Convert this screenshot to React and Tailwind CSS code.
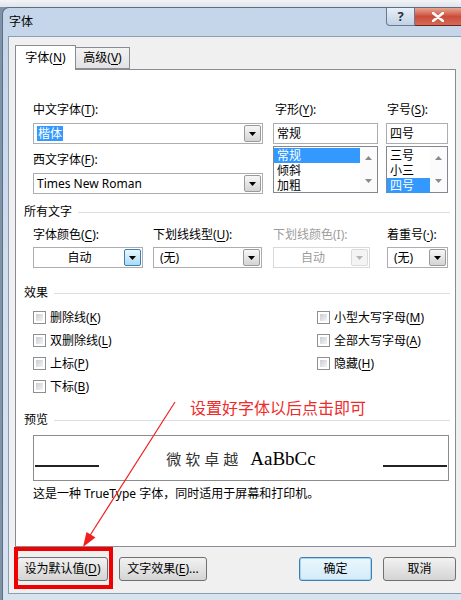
import React from 'react'

const U = ({ children }) => <span className="underline underline-offset-[2px]">{children}</span>

const Arrow = ({ color = '#000' }) => (
  <svg width="7" height="4" viewBox="0 0 7 4">
    <path d="M0 0h7L3.5 4z" fill={color} />
  </svg>
)

const DropBtn = ({ variant }) => {
  const cls =
    variant === 'hot'
      ? 'border-[#3c7fb1] bg-gradient-to-b from-[#eaf6fd] to-[#a9dbf6]'
      : variant === 'off'
      ? 'border-[#dadada] bg-[#f4f4f4]'
      : 'border-[#9a9a9a] bg-gradient-to-b from-[#f7f7f7] to-[#d4d4d4]'
  return (
    <div className={`w-[17px] border rounded-[2px] flex items-center justify-center ${cls}`}>
      <Arrow color={variant === 'off' ? '#b5b5b5' : '#000'} />
    </div>
  )
}

const Combo = ({ className, children, center, variant }) => (
  <div className={`h-[21px] border border-[#abadb3] bg-white flex p-[1px] ${className}`}>
    <div className={`flex-1 flex items-center leading-[16px] ${center ? 'justify-center' : 'pl-[5px]'}`}>{children}</div>
    <DropBtn variant={variant} />
  </div>
)

const ScrollArrows = () => (
  <div className="w-[17px] flex flex-col items-center justify-between py-[9px] bg-[#fbfbfb]">
    <svg width="7" height="4" viewBox="0 0 7 4"><path d="M0 4h7L3.5 0z" fill="#8a8a8a" /></svg>
    <svg width="7" height="4" viewBox="0 0 7 4"><path d="M0 0h7L3.5 4z" fill="#8a8a8a" /></svg>
  </div>
)

const ListBox = ({ items, sel }) => (
  <div className="mt-[2px] h-[47px] border border-[#828790] bg-white flex">
    <div className="flex-1 pt-[1px]">
      {items.map((t, i) => (
        <div
          key={t}
          className={`h-[15px] flex items-center pl-[3px] overflow-hidden ${i === sel ? 'bg-[#3399ff] text-white' : ''}`}
        >
          <span className="leading-[13px]">{t}</span>
        </div>
      ))}
    </div>
    <ScrollArrows />
  </div>
)

const Section = ({ title }) => (
  <div className="flex items-center h-[16px] pl-[8px] pr-[5px]">
    <span className="leading-[16px]">{title}</span>
    <div className="flex-1 h-px bg-[#d5dfe5] ml-[6px]" />
  </div>
)

const Check = ({ children }) => (
  <div className="h-[23px] flex items-center">
    <div className="w-[13px] h-[13px] border border-[#8e8f8f] bg-white p-[2px]">
      <div className="w-full h-full bg-gradient-to-br from-[#c9cdd3] to-[#f4f4f4]" />
    </div>
    <span className="ml-[4px] leading-[16px]">{children}</span>
  </div>
)

const Btn = ({ className, children, def }) => (
  <div
    className={`h-[24px] rounded-[3px] border flex items-center justify-center leading-[16px] ${
      def
        ? 'border-[#3c7fb1] bg-gradient-to-b from-[#eaf6fd] to-[#d4ecf9] shadow-[inset_0_0_0_1px_#a6d4f0]'
        : 'border-[#707070] bg-gradient-to-b from-[#f2f2f2] to-[#d4d4d4]'
    } ${className}`}
  >
    {children}
  </div>
)

export default function App() {
  return (
    <div className="relative w-[461px] h-[600px] overflow-hidden bg-[#7f93a8] text-[12px] text-black font-['Noto_Sans','Noto_Sans_CJK_SC',sans-serif]">
      {/* app behind the dialog */}
      <div className="h-[7px] bg-gradient-to-b from-[#f2f4f7] to-[#dfe5ec]" />

      <div className="ml-[2px] w-[470px] h-[593px] rounded-tl-[7px] border-l border-t border-[#5f6f82] bg-gradient-to-b from-[#c4d5e9] via-[#d2dfee] to-[#d8e3f0] flex flex-col">
        {/* title bar */}
        <div className="h-[28px] flex items-start justify-between pr-[10px]">
          <span className="pl-[6px] pt-[6px] leading-[16px]">字体</span>
          <div className="flex">
            <div className="w-[29px] h-[18px] rounded-bl-[4px] border border-t-0 border-[#6a7a8e] bg-gradient-to-b from-[#e8eff7] to-[#c2d2e4] flex items-center justify-center text-[13px] font-bold text-[#2a3340] leading-none">
              ?
            </div>
            <div className="w-[47px] h-[18px] border border-l-0 border-t-0 border-[#6b2219] bg-gradient-to-b from-[#e8a595] via-[#cc4b3a] to-[#d46a58] flex items-center justify-center">
              <svg width="12" height="10" viewBox="0 0 12 10">
                <path d="M1 1l10 8M11 1L1 9" stroke="#fff" strokeWidth="2.6" strokeLinecap="round" />
              </svg>
            </div>
          </div>
        </div>

        {/* client area */}
        <div className="ml-[5px] flex-1 mb-[6px] border-l border-t border-b border-[#8d9db0] bg-[#f0f0f0] flex flex-col">
          {/* tabs */}
          <div className="pt-[8px] pl-[6px] flex items-end relative z-10">
            <div className="h-[25px] w-[61px] border border-b-0 border-[#898c95] bg-white flex items-center justify-center leading-[16px] mb-[-1px] pb-[1px]">
              字体(<U>N</U>)
            </div>
            <div className="h-[22px] w-[54px] border border-l-0 border-[#898c95] bg-gradient-to-b from-[#f3f3f3] to-[#e2e2e2] flex items-center justify-center leading-[16px]">
              高级(<U>V</U>)
            </div>
          </div>

          {/* tab page */}
          <div className="ml-[6px] w-[441px] h-[478px] border border-[#898c95] bg-white">
            {/* font selection */}
            <div className="mt-[32px] pl-[17px] flex">
              <div className="w-[230px]">
                <div className="h-[16px] leading-[16px]">中文字体(<U>T</U>):</div>
                <div className="mt-[5px] h-[21px] border border-[#abadb3] bg-white flex p-[1px]">
                  <div className="flex-1 flex items-center pl-[2px]">
                    <span className="bg-[#3399ff] text-white px-[1px] leading-[15px]">楷体</span>
                  </div>
                  <DropBtn />
                </div>
                <div className="mt-[8px] h-[16px] leading-[16px]">西文字体(<U>F</U>):</div>
                <div className="mt-[5px] h-[21px] border border-[#abadb3] bg-white flex p-[1px]">
                  <div className="flex-1 flex items-center pl-[2px] leading-[16px]">Times New Roman</div>
                  <DropBtn />
                </div>
              </div>
              <div className="w-[105px] ml-[10px]">
                <div className="h-[16px] leading-[16px] pl-[2px]">字形(<U>Y</U>):</div>
                <div className="mt-[5px] h-[21px] border border-[#abadb3] bg-white flex items-center pl-[3px] leading-[16px]">常规</div>
                <ListBox items={['常规', '倾斜', '加粗']} sel={0} />
              </div>
              <div className="w-[62px] ml-[8px]">
                <div className="h-[16px] leading-[16px] pl-[1px]">字号(<U>S</U>):</div>
                <div className="mt-[5px] h-[21px] border border-[#abadb3] bg-white flex items-center pl-[3px] leading-[16px]">四号</div>
                <ListBox items={['三号', '小三', '四号']} sel={2} />
              </div>
            </div>

            {/* all text */}
            <div className="mt-[10px]">
              <Section title="所有文字" />
            </div>
            <div className="mt-[7px] pl-[17px] flex">
              <div className="w-[110px]">
                <div className="h-[16px] leading-[16px]">字体颜色(<U>C</U>):</div>
                <Combo className="mt-[4px]" center variant="hot">自动</Combo>
              </div>
              <div className="w-[109px] ml-[10px]">
                <div className="h-[16px] leading-[16px]">下划线线型(<U>U</U>):</div>
                <Combo className="mt-[4px]">(无)</Combo>
              </div>
              <div className="w-[97px] ml-[11px]">
                <div className="h-[16px] leading-[16px] text-[#9d9d9d]">下划线颜色(I):</div>
                <Combo className="mt-[4px] border-[#d9d9d9] text-[#9d9d9d]" center variant="off">自动</Combo>
              </div>
              <div className="w-[61px] ml-[17px]">
                <div className="h-[16px] leading-[16px]">着重号(<U>·</U>):</div>
                <Combo className="mt-[4px]">(无)</Combo>
              </div>
            </div>

            {/* effects */}
            <div className="mt-[17px]">
              <Section title="效果" />
            </div>
            <div className="mt-[5px] pl-[17px] flex">
              <div className="w-[284px]">
                <Check>删除线(<U>K</U>)</Check>
                <Check>双删除线(<U>L</U>)</Check>
                <Check>上标(<U>P</U>)</Check>
                <Check>下标(<U>B</U>)</Check>
              </div>
              <div>
                <Check>小型大写字母(<U>M</U>)</Check>
                <Check>全部大写字母(<U>A</U>)</Check>
                <Check>隐藏(<U>H</U>)</Check>
              </div>
            </div>

            {/* preview */}
            <div className="mt-[14px]">
              <Section title="预览" />
            </div>
            <div className="mt-[7px] ml-[17px] w-[416px] h-[46px] border border-[#8c8c8c] bg-white flex items-end pb-[13px] px-[1px]">
              <div className="w-[64px] h-[2px] bg-[#222]" />
              <div className="flex-1 flex items-baseline justify-center mb-[-2px]">
                <span className="text-[15px] tracking-[4px] text-[#333] font-['Noto_Sans_CJK_SC',sans-serif] leading-[20px]">微软卓越</span>
                <span className="ml-[8px] text-[19px] font-['Liberation_Serif',serif] leading-[20px]">AaBbCc</span>
              </div>
              <div className="w-[64px] h-[2px] bg-[#222]" />
            </div>
            <div className="mt-[5px] pl-[17px] h-[16px] leading-[16px]">这是一种 TrueType 字体，同时适用于屏幕和打印机。</div>
          </div>

          {/* buttons */}
          <div className="mt-[10px] pl-[8px] flex">
            <Btn className="w-[91px]">设为默认值(<U>D</U>)</Btn>
            <Btn className="w-[88px] ml-[11px]">文字效果(<U>E</U>)...</Btn>
            <Btn className="w-[73px] ml-[92px]" def>确定</Btn>
            <Btn className="w-[73px] ml-[11px]">取消</Btn>
          </div>
        </div>
      </div>

      {/* red annotations */}
      <div className="absolute left-[190px] top-[398px] text-[16px] leading-[18px] text-[#ee2b2b] font-['Noto_Sans_CJK_SC',sans-serif]">
        设置好字体以后点击即可
      </div>
      <svg className="absolute left-0 top-0 pointer-events-none" width="461" height="600">
        <line x1="175" y1="402" x2="89" y2="537" stroke="#f02020" strokeWidth="1.2" />
        <path d="M83 547L95.5 537.5L86.5 532z" fill="#f02020" />
      </svg>
      <div className="absolute left-[14px] top-[547px] w-[99px] h-[42px] border-4 border-[#f00000]" />
    </div>
  )
}
